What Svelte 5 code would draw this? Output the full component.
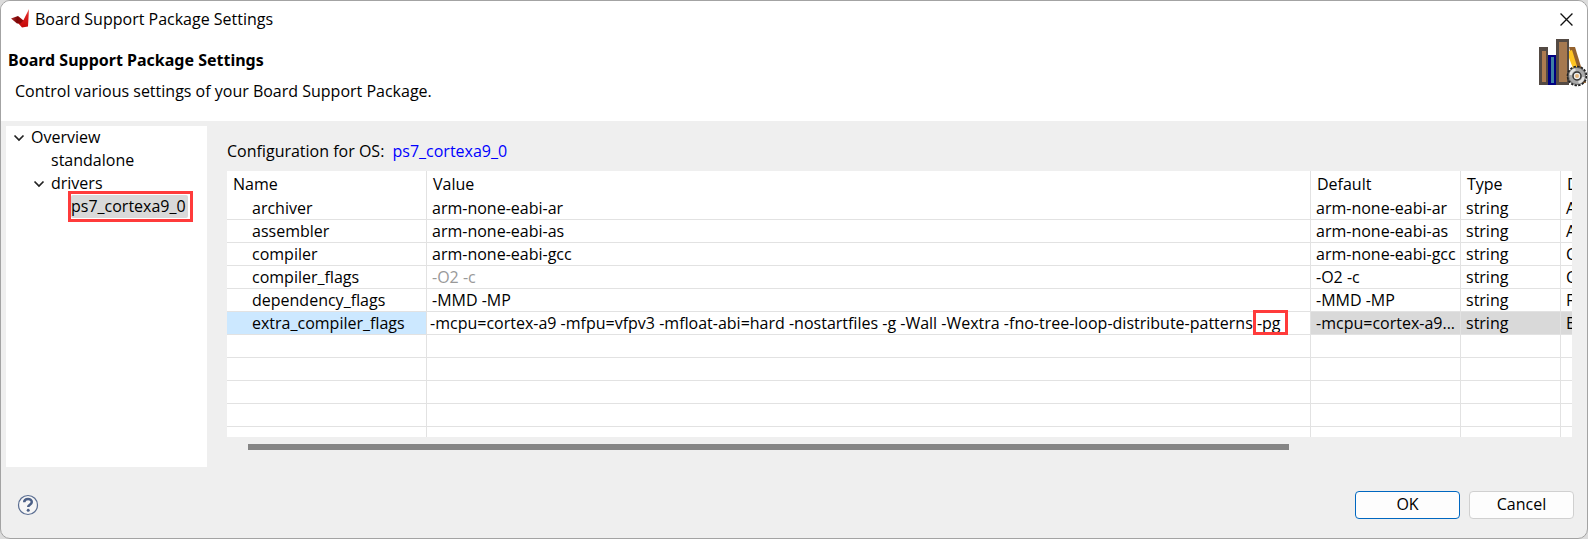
<script>
  let flags = $state(
    '-mcpu=cortex-a9 -mfpu=vfpv3 -mfloat-abi=hard -nostartfiles -g -Wall -Wextra -fno-tree-loop-distribute-patterns -pg'
  );

  const rows = [
    { name: 'archiver', value: 'arm-none-eabi-ar', initial: 'arm-none-eabi-ar', description: 'Archiver' },
    { name: 'assembler', value: 'arm-none-eabi-as', initial: 'arm-none-eabi-as', description: 'Assembler' },
    { name: 'compiler', value: 'arm-none-eabi-gcc', initial: 'arm-none-eabi-gcc', description: 'Compiler' },
    { name: 'compiler_flags', value: '-O2 -c', initial: '-O2 -c', description: 'Compiler', muted: true },
    { name: 'dependency_flags', value: '-MMD -MP', initial: '-MMD -MP', description: 'Flags' },
    { name: 'extra_compiler_flags', initial: '-mcpu=cortex-a9...', description: 'Extra', editing: true }
  ];
  const blanks = [1, 2, 3, 4, 5];
</script>

{#snippet chevron()}
  <svg class="chevron" viewBox="0 0 12 12" aria-hidden="true">
    <path d="M1.5 3.5 6 8l4.500-4.500" fill="none" stroke="#222" stroke-width="1.700" />
  </svg>
{/snippet}

<main class="dialog">
  <header>
    <div class="titlebar">
      <svg class="logo" viewBox="0 0 20 20" aria-hidden="true">
        <defs>
          <linearGradient id="blade" x1="0" y1="0" x2="0" y2="1">
            <stop offset="0" stop-color="#ee6a60" />
            <stop offset="0.350" stop-color="#dc2020" />
            <stop offset="1" stop-color="#c40808" />
          </linearGradient>
          <linearGradient id="wing" x1="0" y1="0" x2="1" y2="0">
            <stop offset="0" stop-color="#b03030" />
            <stop offset="0.500" stop-color="#7c0606" />
            <stop offset="1" stop-color="#a00808" />
          </linearGradient>
        </defs>
        <path d="M19 0 13.500 11 8 14 12 18.500 18 17.500Z" fill="url(#blade)" />
        <path d="M1 9.500 8 7 13.500 11.500 10.500 14.500 7 14.500Z" fill="url(#wing)" />
      </svg>
      <span class="caption">Board Support Package Settings</span>
      <button class="close" aria-label="Close">
        <svg viewBox="0 0 12 12" aria-hidden="true"><path d="M.5.5l11 11M11.500.5l-11 11" stroke="#111" stroke-width="1.200" /></svg>
      </button>
    </div>
    <div class="banner">
      <div>
        <h1>Board Support Package Settings</h1>
        <p>Control various settings of your Board Support Package.</p>
      </div>
      <svg class="books" viewBox="0 0 48 48" aria-hidden="true">
        <path d="M30 8h6l11 36h-9Z" fill="#94622e" />
        <path d="M30 12l3-1 8 26h-4L30 19Z" fill="#ffc421" />
        <path d="M0 8h9v38H0Z" fill="#544a44" />
        <path d="M3 12h4v31H3Z" fill="#ad7b50" />
        <path d="M9 16h8v30H9Z" fill="#000080" />
        <path d="M12 18h3v26h-3Z" fill="#3e80a4" />
        <path d="M17 0h13v46H17Z" fill="#544a44" />
        <path d="M20 3h8v40h-8Z" fill="#a67950" />
        <circle cx="38" cy="37" r="9.200" fill="none" stroke="#222" stroke-width="2.200" stroke-dasharray="2.400 1.200" />
        <circle cx="38" cy="37" r="8.500" fill="#a9a9a9" stroke="#555" stroke-width="0.800" />
        <path d="M31.500 36a6.500 6.500 0 0 1 5-5.500M44.500 38a6.500 6.500 0 0 1-5 5.500" fill="none" stroke="#e4e4e4" stroke-width="2.500" />
        <circle cx="38" cy="37" r="4" fill="#eee" stroke="#333" stroke-width="1.500" />
        <circle cx="38" cy="37" r="2" fill="#e3b47c" />
      </svg>
    </div>
  </header>

  <div class="body">
    <nav aria-label="Settings">
      <ul>
        <li><button class="node">{@render chevron()}Overview</button>
          <ul>
            <li><button class="node leaf">standalone</button></li>
            <li><button class="node">{@render chevron()}drivers</button>
              <ul><li class="marked"><button class="node current">ps7_cortexa9_0</button></li></ul>
            </li>
          </ul>
        </li>
      </ul>
    </nav>

    <section>
      <div class="os">Configuration for OS: <a href="#os">ps7_cortexa9_0</a></div>
      <div class="grid">
        <table>
          <colgroup><col class="c-name" /><col /><col class="c-default" /><col class="c-type" /><col class="c-desc" /></colgroup>
          <thead>
            <tr><th>Name</th><th>Value</th><th>Default</th><th>Type</th><th>Description</th></tr>
          </thead>
          <tbody>
            {#each rows as row}
              <tr class:selected={row.editing}>
                <td>{row.name}</td>
                {#if row.editing}
                  <td class="editor">
                    <input type="text" aria-label={row.name} bind:value={flags} />
                    <span class="callout"></span>
                  </td>
                {:else}
                  <td class:muted={row.muted}>{row.value}</td>
                {/if}
                <td>{row.initial}</td>
                <td>string</td>
                <td>{row.description}</td>
              </tr>
            {/each}
            {#each blanks as blank}
              <tr><td></td><td></td><td></td><td></td><td></td></tr>
            {/each}
          </tbody>
        </table>
      </div>
      <div class="scrollbar"><div class="thumb"></div></div>
    </section>
  </div>

  <footer>
    <button class="help" aria-label="Help">
      <svg viewBox="0 0 22 22" aria-hidden="true">
        <circle cx="11" cy="11" r="9.500" fill="#f6f6f6" stroke="#5b6e92" stroke-width="1.200" />
        <path d="M7.200 8.200C7.300 3.800 14.800 3.900 14.800 8c0 2.700-3.600 2.700-3.600 5" fill="none" stroke="#4c6087" stroke-width="2.500" />
        <circle cx="11.200" cy="16.200" r="1.500" fill="#4c6087" />
      </svg>
    </button>
    <div class="actions">
      <button class="push default">OK</button>
      <button class="push">Cancel</button>
    </div>
  </footer>
</main>

<style>
  :global(body) {
    background: #dcdcdc;
  }
  * {
    box-sizing: border-box;
  }
  .dialog {
    display: flex;
    flex-direction: column;
    min-height: 100vh;
    border: 1px solid #a3a3a3;
    border-radius: 10px;
    overflow: hidden;
    background: #efefef;
    color: #000;
    font: 16px/23px "Open Sans", "Noto Sans", sans-serif;
  }
  button,
  input {
    font: inherit;
    color: inherit;
  }
  button {
    border: 0;
    padding: 0;
    background: none;
  }
  svg {
    display: block;
  }
  header {
    background: #fff;
    height: 120px;
  }
  .titlebar {
    display: flex;
    align-items: center;
    height: 36px;
    padding: 0 14px 0 9px;
  }
  .logo {
    width: 20px;
    height: 20px;
    margin-right: 5px;
  }
  .caption {
    flex: 1;
  }
  .close svg {
    width: 13px;
    height: 13px;
  }
  .banner {
    display: flex;
    justify-content: space-between;
    padding: 2px 0 0 7px;
  }
  h1 {
    margin: 10px 0 8px;
    font-family: "Noto Sans", sans-serif;
    font-size: 16px;
    line-height: 23px;
  }
  p {
    margin: 0 0 0 7px;
  }
  .books {
    width: 48px;
    height: 48px;
  }
  .body {
    display: flex;
    flex: 1;
    padding: 5px 15px 0 5px;
    gap: 20px;
  }
  nav {
    width: 201px;
    background: #fff;
  }
  ul {
    margin: 0;
    padding: 0;
    list-style: none;
  }
  ul ul {
    padding-left: 20px;
  }
  .node {
    display: flex;
    align-items: center;
    height: 23px;
    padding-left: 7px;
    gap: 6px;
  }
  .chevron {
    width: 12px;
    height: 12px;
  }
  .leaf {
    padding-left: 25px;
  }
  .marked {
    display: flex;
    width: 125px;
    margin: -4px 0 0 22px;
    border: 3px solid #ff3b3b;
    padding: 1px 2px 1px 0;
  }
  .current {
    width: 100%;
    padding-left: 0;
    border-radius: 2px;
    background: #d9d9d9;
  }
  section {
    flex: 1;
    min-width: 0;
  }
  .os {
    padding: 14px 0 8px;
  }
  .os a {
    margin-left: 4px;
    color: #00f;
    text-decoration: none;
  }
  .grid {
    height: 266px;
    background: #fff;
    overflow: hidden;
  }
  table {
    width: 100%;
    table-layout: fixed;
    border-collapse: separate;
    border-spacing: 0;
  }
  .c-name {
    width: 200px;
  }
  .c-default {
    width: 150px;
  }
  .c-type {
    width: 100px;
  }
  .c-desc {
    width: 11px;
  }
  th,
  td {
    height: 23px;
    padding: 0 0 0 5px;
    border-right: 1px solid #e2e2e2;
    text-align: left;
    font-weight: 400;
    white-space: nowrap;
    overflow: hidden;
  }
  td {
    border-bottom: 1px solid #e2e2e2;
    line-height: 22px;
  }
  th {
    height: 26px;
    padding-left: 6px;
  }
  td:first-child {
    padding-left: 25px;
  }
  th:last-child,
  td:last-child {
    border-right: 0;
  }
  .muted {
    color: #999;
  }
  .selected td {
    background: #d9d9d9;
  }
  .selected td:first-child {
    background: #cce8ff;
  }
  .selected .editor {
    position: relative;
    padding: 0;
    background: #fff;
    overflow: visible;
  }
  .editor input {
    display: block;
    width: 100%;
    height: 22px;
    padding: 0 0 0 3px;
    border: 0;
    outline: 0;
    background: none;
  }
  .callout {
    position: absolute;
    top: -2px;
    right: 22px;
    width: 35px;
    height: 25px;
    border: 3px solid #ff3b3b;
  }
  .scrollbar {
    padding: 7px 0 0;
    height: 30px;
  }
  .thumb {
    width: 77.4%;
    height: 6px;
    margin-left: 21px;
    background: #858585;
  }
  footer {
    display: flex;
    align-items: center;
    justify-content: space-between;
    height: 71px;
    padding: 4px 13px 0 16px;
  }
  .help svg {
    width: 22px;
    height: 22px;
  }
  .actions {
    display: flex;
    gap: 9px;
  }
  .push {
    width: 105px;
    height: 28px;
    border: 1px solid #d0d0d0;
    border-radius: 4px;
    background: #fdfdfd;
  }
  .default {
    border-color: #0067c0;
  }
</style>
